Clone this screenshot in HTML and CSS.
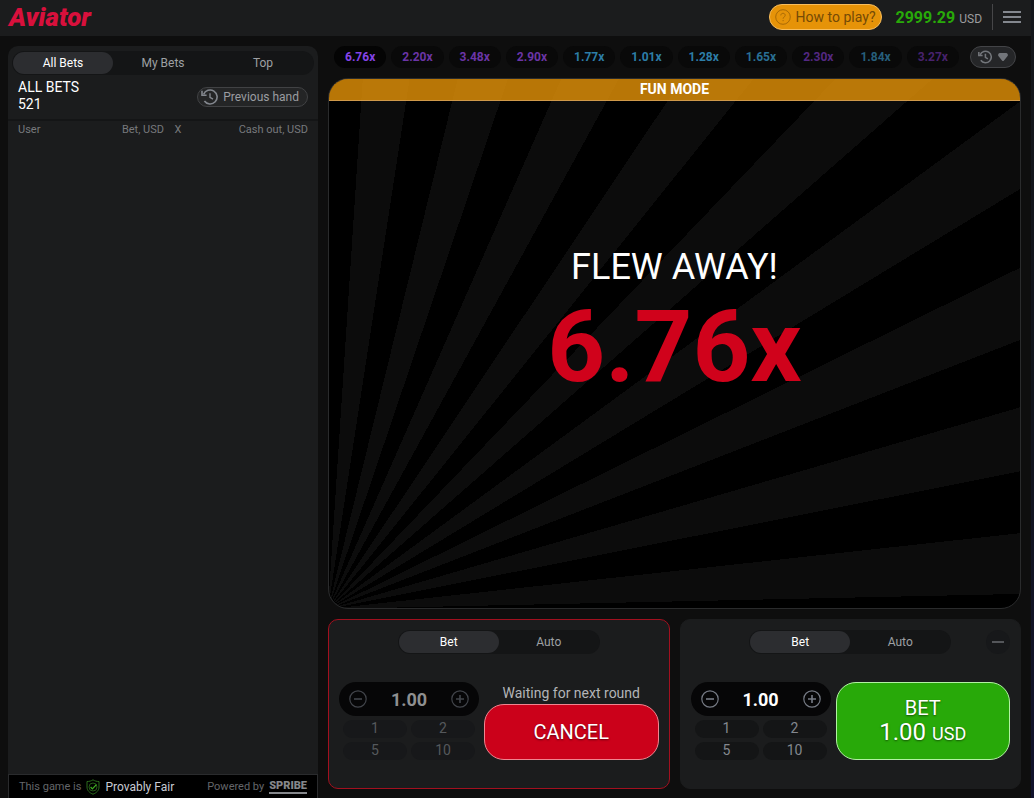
FILE: index.html
```html
<!DOCTYPE html>
<html lang="en">
<head>
<meta charset="utf-8">
<meta name="viewport" content="width=device-width, initial-scale=1">
<title>Aviator</title>
<link rel="stylesheet" href="styles.css">
</head>
<body>
<div class="app">
  <header class="topbar">
    <a class="logo" href="#">Aviator</a>
    <button class="howto" type="button">
      <svg width="16" height="16" viewBox="0 0 16 16" fill="none" stroke="currentColor" aria-hidden="true"><circle cx="8" cy="8" r="7.3"/><path d="M5.8 6.4c0-1.3 1-2.1 2.2-2.1s2.2.8 2.2 2c0 1.6-2.1 1.7-2.1 3.4M8.1 11v1.2"/></svg>
      <span>How to play?</span>
    </button>
    <div class="balance"><b>2999.29</b><span>USD</span></div>
    <button class="menu" type="button" aria-label="Menu">
      <svg width="18" height="12" viewBox="0 0 18 12" aria-hidden="true"><path d="M0 0h18v2H0zM0 5h18v2H0zM0 10h18v2H0z" fill="currentColor"/></svg>
    </button>
  </header>

  <main class="layout">
    <aside class="sidebar">
      <nav class="tabs side-tabs">
        <button class="tab active" type="button">All Bets</button>
        <button class="tab" type="button">My Bets</button>
        <button class="tab" type="button">Top</button>
      </nav>
      <div class="summary">
        <div class="total">ALL BETS<br>521</div>
        <button class="previous" type="button">
          <svg width="17" height="16" viewBox="0 0 17 16" fill="none" stroke="currentColor" stroke-width="1.6" aria-hidden="true"><path d="M2.6 5.4A7 7 0 1 1 3.4 12"/><path d="M1 1.8v4.4h4.6" /><path d="M9 4.2v4.2l3 1.8" stroke-width="1.4"/></svg>
          <span>Previous hand</span>
        </button>
      </div>
      <table class="bets">
        <thead><tr><th class="c-user">User</th><th class="c-bet">Bet, USD</th><th class="c-x">X</th><th class="c-out">Cash out, USD</th></tr></thead>
      </table>
      <footer class="foot">
        <span>This game is</span>
        <svg width="14" height="16" viewBox="0 0 14 16" fill="none" aria-hidden="true"><path d="M7 .8c1.700 1.200 3.700 1.700 6 1.700v5.500c0 3.500-2.500 5.800-6 7.200-3.500-1.400-6-3.700-6-7.200V2.500c2.300 0 4.300-.5 6-1.700z" stroke="#2c6d1c"/><circle cx="7" cy="8" r="4" stroke="#245818"/><path d="M4.600 8l1.800 1.900 4-4.300" stroke="#3fae20" stroke-width="1.300"/></svg>
        <a class="fair" href="#">Provably Fair</a>
        <span class="powered">Powered by</span>
        <a class="spribe" href="#">SPRIBE</a>
      </footer>
    </aside>

    <section class="game">
      <div class="history">
        <ul class="odds">
          <li class="violet now">6.76x</li><li class="violet">2.20x</li><li class="violet">3.48x</li><li class="violet">2.90x</li><li class="blue">1.77x</li><li class="blue">1.01x</li><li class="blue">1.28x</li><li class="blue dim1">1.65x</li><li class="violet dim2">2.30x</li><li class="blue dim2">1.84x</li><li class="violet dim3">3.27x</li>
        </ul>
        <button class="history-toggle" type="button" aria-label="Round history">
          <svg width="14" height="14" viewBox="0 0 17 16" fill="none" stroke="currentColor" stroke-width="1.900" aria-hidden="true"><path d="M2.600 5.400A7 7 0 1 1 3.400 12"/><path d="M1 1.800v4.400h4.600"/><path d="M9 4.200v4.200l3 1.800"/></svg>
          <svg width="10" height="8" viewBox="0 0 10 8" aria-hidden="true"><path d="M2 0h6a2 2 0 0 1 1.400 3.300L6 7.400a1.300 1.300 0 0 1-2 0L.6 3.300A2 2 0 0 1 2 0z" fill="currentColor"/></svg>
        </button>
      </div>

      <div class="stage">
        <div class="mode">FUN MODE</div>
        <div class="result">
          <div class="flew">FLEW AWAY!</div>
          <div class="multiplier">6.76x</div>
        </div>
      </div>

      <div class="panels">
        <section class="panel waiting">
          <div class="panel-head">
            <nav class="tabs bet-tabs"><button class="tab active" type="button">Bet</button><button class="tab" type="button">Auto</button></nav>
          </div>
          <div class="controls">
            <div class="amount">
              <div class="spinner">
                <button class="step" type="button" aria-label="Decrease"><svg width="18" height="18" viewBox="0 0 18 18" fill="none" stroke="currentColor" stroke-width="1.200"><circle cx="9" cy="9" r="8.200"/><path d="M5 9h8" stroke-width="1.600"/></svg></button>
                <input class="value" type="text" value="1.00" aria-label="Bet amount">
                <button class="step" type="button" aria-label="Increase"><svg width="18" height="18" viewBox="0 0 18 18" fill="none" stroke="currentColor" stroke-width="1.200"><circle cx="9" cy="9" r="8.200"/><path d="M5 9h8M9 5v8" stroke-width="1.600"/></svg></button>
              </div>
              <div class="quick"><button type="button">1</button><button type="button">2</button><button type="button">5</button><button type="button">10</button></div>
            </div>
            <div class="action">
              <div class="note">Waiting for next round</div>
              <button class="big cancel" type="button">CANCEL</button>
            </div>
          </div>
        </section>

        <section class="panel">
          <div class="panel-head">
            <nav class="tabs bet-tabs"><button class="tab active" type="button">Bet</button><button class="tab" type="button">Auto</button></nav>
            <button class="remove" type="button" aria-label="Remove panel"></button>
          </div>
          <div class="controls">
            <div class="amount">
              <div class="spinner">
                <button class="step" type="button" aria-label="Decrease"><svg width="18" height="18" viewBox="0 0 18 18" fill="none" stroke="currentColor" stroke-width="1.200"><circle cx="9" cy="9" r="8.200"/><path d="M5 9h8" stroke-width="1.600"/></svg></button>
                <input class="value" type="text" value="1.00" aria-label="Bet amount">
                <button class="step" type="button" aria-label="Increase"><svg width="18" height="18" viewBox="0 0 18 18" fill="none" stroke="currentColor" stroke-width="1.200"><circle cx="9" cy="9" r="8.200"/><path d="M5 9h8M9 5v8" stroke-width="1.600"/></svg></button>
              </div>
              <div class="quick"><button type="button">1</button><button type="button">2</button><button type="button">5</button><button type="button">10</button></div>
            </div>
            <div class="action">
              <button class="big place" type="button"><span class="bet-label">BET</span><span class="bet-sum">1.00 <small>USD</small></span></button>
            </div>
          </div>
        </section>
      </div>
    </section>
  </main>
</div>
</body>
</html>
```
FILE: styles.css
```css
* { box-sizing: border-box; }

body {
  margin: 0;
  padding-right: 3px;
  background: linear-gradient(#14171c 0%, #10131c 50%, #10122c 100%);
  color: #fff;
  font-family: Roboto, "Liberation Sans", sans-serif;
  font-size: 12px;
}

button, input {
  margin: 0;
  padding: 0;
  border: 0;
  background: none;
  color: inherit;
  font: inherit;
}

a { color: inherit; text-decoration: none; }
svg { display: block; flex: none; }

.app {
  display: flex;
  flex-direction: column;
  min-height: 100vh;
  background: #0e0e0e;
}

/* Top bar */
.topbar {
  display: flex;
  align-items: center;
  height: 36px;
  padding: 0 10px 2px 9px;
  background: #1b1c1d;
}
.logo {
  margin-right: auto;
  color: #d8103c;
  font-size: 26px;
  font-style: italic;
  font-weight: 900;
  line-height: 32px;
}
.howto {
  display: flex;
  align-items: center;
  gap: 5px;
  height: 26px;
  padding: 0 5px;
  border: 1px solid #f8bd5c;
  border-radius: 13px;
  background: #e69308;
  color: #744a06;
  font-size: 14px;
}
.howto svg { color: #a96a06; }
.balance {
  display: flex;
  align-items: baseline;
  gap: 4px;
  margin-left: 14px;
  color: #9b9c9e;
}
.balance b { color: #28a909; font-size: 16px; }
.menu {
  display: flex;
  align-items: center;
  height: 26px;
  margin-left: 10px;
  padding-left: 10px;
  border-left: 1px solid #464648;
  color: #83878e;
}

/* Page columns */
.layout {
  display: flex;
  flex: 1;
  gap: 10px;
  padding: 10px 10px 0 8px;
}
.sidebar {
  display: flex;
  flex: 0 0 310px;
  flex-direction: column;
  border-radius: 10px 10px 0 0;
  background: #1b1c1d;
}
.game {
  display: flex;
  flex: 1;
  flex-direction: column;
  min-width: 0;
  padding-bottom: 9px;
}

/* Segmented tabs */
.tabs {
  display: flex;
  padding: 1px;
  border-radius: 12px;
  background: #141516;
}
.tab {
  flex: 1;
  height: 22px;
  border-radius: 11px;
  color: #9ea0a3;
}
.tab.active { background: #2c2d30; color: #fff; }
.side-tabs { margin: 5px 4px 0; }
.bet-tabs { width: 202px; }

/* Sidebar */
.summary {
  display: flex;
  align-items: center;
  justify-content: space-between;
  padding: 4px 10px 6px;
  border-bottom: 2px solid #141516;
}
.total { font-size: 14px; line-height: 17px; }
.previous {
  display: flex;
  align-items: center;
  gap: 5px;
  height: 20px;
  margin-top: 2px;
  padding: 0 8px 0 3px;
  border: 1px solid #414244;
  border-radius: 10px;
  background: #242526;
  color: #83878e;
}
.previous span { color: #9b9da1; }
.bets {
  width: 100%;
  border-collapse: collapse;
  color: #77797c;
  font-size: 11px;
  line-height: 18px;
}
.bets th { padding: 0; font-weight: 400; text-align: left; }
.bets .c-user { width: 90px; padding-left: 10px; }
.bets .c-bet { width: 66px; text-align: right; }
.bets .c-x { width: 28px; text-align: center; }
.bets .c-out { padding-right: 10px; text-align: right; }
.foot {
  display: flex;
  align-items: center;
  gap: 5px;
  height: 24px;
  margin-top: auto;
  padding: 0 10px;
  border: 1px solid #2a2b2d;
  border-bottom: 0;
  background: #000;
  color: #64666a;
  font-size: 11px;
}
.fair { color: #c9ccd4; font-size: 12px; }
.powered { margin-left: auto; }
.spribe {
  border-bottom: 2px solid #85878b;
  color: #85878b;
  font-size: 11px;
  font-weight: 900;
  line-height: 12px;
}

/* Round history */
.history {
  display: flex;
  align-items: center;
  gap: 11px;
  height: 22px;
  padding: 0 5px 0 6px;
}
.odds {
  display: flex;
  flex: 1;
  justify-content: space-between;
  margin: 0;
  padding: 0;
  list-style: none;
  font-weight: 700;
  line-height: 22px;
}
.odds li { padding: 0 11px; border-radius: 11px; background: #090909; }
.odds .violet { color: #6b35a6; }
.odds .now { background: #040404; color: #8443e8; }
.odds .blue { color: #2d7ea8; }
.odds .dim1 { color: #296f94; }
.odds .violet.dim2 { color: #542882; }
.odds .blue.dim2 { color: #265f7c; }
.odds .violet.dim3 { color: #48226d; }
.history-toggle {
  display: flex;
  align-items: center;
  justify-content: center;
  gap: 6px;
  width: 46px;
  height: 22px;
  border: 1px solid #434447;
  border-radius: 11px;
  background: #252628;
  color: #73767b;
}

/* Sunburst play area */
.stage {
  display: flex;
  flex: 1;
  flex-direction: column;
  margin-top: 10px;
  overflow: hidden;
  border: 1px solid #2a2b2c;
  border-radius: 20px;
  background: repeating-conic-gradient(from -1.25deg at 0 100%, #000 0 5deg, #0c0c0c 5deg 10deg) border-box;
}
.mode {
  margin: -1px -1px 0;
  border: 1px solid #cf994a;
  border-radius: 20px 20px 0 0;
  background: rgba(230, 147, 8, 0.8);
  font-size: 14px;
  font-weight: 700;
  line-height: 21px;
  text-align: center;
}
.result {
  display: flex;
  flex: 1;
  flex-direction: column;
  align-items: center;
  justify-content: center;
  padding-bottom: 60px;
}
.flew { font-size: 36px; line-height: 44px; }
.multiplier { color: #d0021b; font-size: 101px; font-weight: 700; line-height: 116px; }

/* Bet panels */
.panels {
  display: grid;
  grid-template-columns: 1fr 1fr;
  gap: 10px;
  margin-top: 10px;
}
.panel {
  height: 170px;
  padding: 10px;
  border: 1px solid #1b1c1d;
  border-radius: 10px;
  background: #1b1c1d;
}
.panel.waiting { border-color: #a2101f; }
.panel-head {
  display: grid;
  grid-template-columns: 1fr auto 1fr;
  align-items: center;
}
.bet-tabs { grid-column: 2; }
.remove {
  display: flex;
  align-items: center;
  justify-content: center;
  justify-self: end;
  width: 24px;
  height: 24px;
  border-radius: 12px;
  background: #17181a;
}
.remove::before { content: ""; width: 12px; height: 2px; background: #54565a; }
.controls { display: flex; gap: 5px; margin-top: 28px; }
.amount { flex: 0 0 140px; }
.spinner {
  display: flex;
  align-items: center;
  justify-content: space-between;
  height: 34px;
  padding: 0 10px;
  border-radius: 17px;
  background: #060607;
}
.step { color: #767b85; }
.value {
  width: 70px;
  min-width: 0;
  font-size: 18px;
  font-weight: 700;
  text-align: center;
}
.quick {
  display: grid;
  grid-template-columns: 1fr 1fr;
  gap: 4px;
  padding: 4px 4px 0;
}
.quick button {
  height: 18px;
  padding-bottom: 2px;
  border-radius: 9px;
  background: #141516;
  color: #83878e;
  font-size: 14px;
  line-height: 16px;
}
.waiting .step { color: #42454b; }
.waiting .value { color: #8e8f90; }
.waiting .quick button { background: #17181a; color: #55585c; }
.action { display: flex; flex: 1; flex-direction: column; }
.note {
  color: #b3b5b8;
  font-size: 14px;
  line-height: 22px;
  text-align: center;
}
.big {
  display: flex;
  flex: 1;
  flex-direction: column;
  align-items: center;
  justify-content: center;
  border: 1px solid #fff;
  border-radius: 20px;
  font-size: 20px;
  line-height: 24px;
  text-shadow: 0 1px 2px rgba(0, 0, 0, 0.5);
}
.cancel { border-color: #f08590; background: #cb011a; }
.place { border-color: #b2f2a3; background: #28a909; }
.bet-sum { font-size: 24px; }
.bet-sum small { font-size: 18px; }
```
